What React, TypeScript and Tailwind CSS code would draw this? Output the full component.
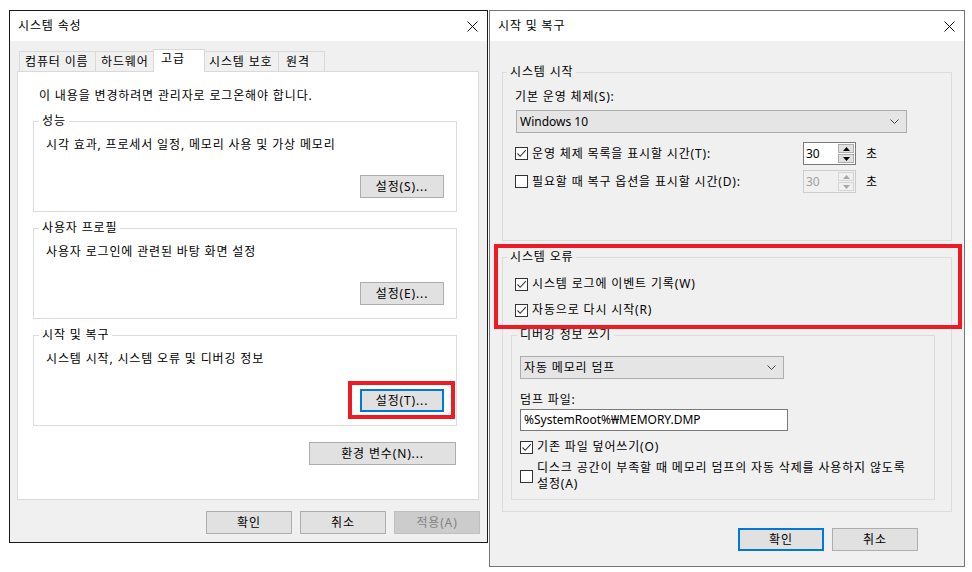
import type { ReactNode } from "react";

const font = "font-['Noto_Sans','Noto_Sans_CJK_KR',sans-serif]";

function CloseIcon() {
	return (
		<svg width="11" height="11" viewBox="0 0 11 11" aria-hidden>
			<path d="M0.5 0.5 L10.5 10.5 M10.5 0.5 L0.5 10.5" stroke="#111" strokeWidth="1" fill="none" />
		</svg>
	);
}

function TitleBar({ title }: { title: string }) {
	return (
		<div className="flex h-[30px] shrink-0 items-center justify-between bg-white pl-[8px] pr-[9px]">
			<span>{title}</span>
			<CloseIcon />
		</div>
	);
}

function Check({ checked }: { checked?: boolean }) {
	return (
		<span className="flex h-[13px] w-[13px] shrink-0 items-center justify-center border border-[#333333] bg-white">
			{checked ? (
				<svg width="11" height="11" viewBox="0 0 11 11" aria-hidden>
					<path d="M1.5 5.5 L4.2 8.3 L9.8 2.2" stroke="#333" strokeWidth="1.1" fill="none" />
				</svg>
			) : null}
		</span>
	);
}

function CheckRow({ checked, children, className = "" }: { checked?: boolean; children: ReactNode; className?: string }) {
	return (
		<div className={`flex items-center ${className}`}>
			<Check checked={checked} />
			<span className="ml-[4px]">{children}</span>
		</div>
	);
}

function Dropdown({ value, className = "", latin }: { value: string; className?: string; latin?: boolean }) {
	return (
		<div className={`flex h-[23px] items-center justify-between border border-[#adadad] bg-[#e5e5e5] pl-[3px] pr-[7px] ${className}`}>
			<span className={latin ? "tracking-normal" : ""}>{value}</span>
			<svg width="9" height="5" viewBox="0 0 9 5" aria-hidden>
				<path d="M0.5 0.5 L4.5 4.5 L8.5 0.5" stroke="#444" strokeWidth="1" fill="none" />
			</svg>
		</div>
	);
}

function Spin({ disabled }: { disabled?: boolean }) {
	const box = disabled ? "border-[#cccccc] bg-[#f0f0f0] text-[#a0a0a0]" : "border-[#7a7a7a] bg-white text-black";
	const arrowBtn = disabled ? "border-[#d5d5d5] bg-[#f0f0f0]" : "border-[#adadad] bg-[#e1e1e1]";
	const fill = disabled ? "#a8a8a8" : "#000";
	return (
		<div className={`flex h-[23px] w-[53px] border ${box}`}>
			<span className="flex flex-1 items-center pl-[2px] tracking-normal">30</span>
			<span className="flex w-[17px] flex-col justify-center gap-[1px] py-[1px] pr-[1px]">
				<span className={`flex h-[9px] items-center justify-center border ${arrowBtn}`}>
					<svg width="7" height="4" viewBox="0 0 7 4" aria-hidden>
						<path d="M0 4 L3.5 0 L7 4 Z" fill={fill} />
					</svg>
				</span>
				<span className={`flex h-[9px] items-center justify-center border ${arrowBtn}`}>
					<svg width="7" height="4" viewBox="0 0 7 4" aria-hidden>
						<path d="M0 0 L3.5 4 L7 0 Z" fill={fill} />
					</svg>
				</span>
			</span>
		</div>
	);
}

const buttonBase = "flex h-[23px] items-center justify-center bg-[#e1e1e1]";
const tabBase = "-ml-px flex h-[20px] items-center border border-b-0 border-[#d9d9d9] bg-[#f0f0f0]";

function SettingGroup({
	label,
	description,
	button,
	className = "",
	highlighted,
}: {
	label: string;
	description: string;
	button: string;
	className?: string;
	highlighted?: boolean;
}) {
	return (
		<fieldset className={`h-[99px] w-[424px] border border-[#dcdcdc] p-0 ${className}`}>
			<legend className="ml-[5px] px-[3px]">{label}</legend>
			<p className="pl-[12px] pt-[8px]">{description}</p>
			<div className="mt-[22px] flex justify-end pr-[12px]">
				{highlighted ? (
					<div className="relative">
						<button className={`${buttonBase} w-[84px] border-2 border-[#0078d7]`}>{button}</button>
						<span className="pointer-events-none absolute -left-[12px] -top-[8px] h-[38px] w-[107px] border-4 border-[#ed1c24]" />
					</div>
				) : (
					<button className={`${buttonBase} w-[84px] border border-[#adadad]`}>{button}</button>
				)}
			</div>
		</fieldset>
	);
}

function SystemProperties() {
	return (
		<div className="flex h-[533px] w-[479px] shrink-0 flex-col border border-[#1a1a1a] bg-[#f0f0f0]">
			<TitleBar title="시스템 속성" />
			<div className="flex flex-col px-[7px] pt-[8px]">
				<div className="flex h-[22px] items-end pl-[3px]">
					<div className={`${tabBase} w-[77px] pl-[5px]`}>컴퓨터 이름</div>
					<div className={`${tabBase} w-[59px] pl-[5px]`}>하드웨어</div>
					<div className="relative z-10 -mb-px -ml-px flex h-[23px] w-[52px] items-start border border-b-0 border-[#d9d9d9] bg-white pl-[7px] pt-[1px]">
						고급
					</div>
					<div className={`${tabBase} w-[75px] pl-[4px]`}>시스템 보호</div>
					<div className={`${tabBase} w-[47px] pl-[7px]`}>원격</div>
				</div>
				<div className="h-[429px] w-[462px] border border-[#d9d9d9] bg-white pl-[15px] pt-[16px]">
					<p className="pl-[6px]">이 내용을 변경하려면 관리자로 로그온해야 합니다.</p>
					<SettingGroup
						className="mt-[9px]"
						label="성능"
						description="시각 효과, 프로세서 일정, 메모리 사용 및 가상 메모리"
						button="설정(S)..."
					/>
					<SettingGroup
						className="mt-[8px]"
						label="사용자 프로필"
						description="사용자 로그인에 관련된 바탕 화면 설정"
						button="설정(E)..."
					/>
					<SettingGroup
						className="mt-[8px]"
						label="시작 및 복구"
						description="시스템 시작, 시스템 오류 및 디버깅 정보"
						button="설정(T)..."
						highlighted
					/>
					<div className="mt-[16px] flex w-[424px] justify-end pr-[1px]">
						<button className={`${buttonBase} w-[147px] border border-[#adadad]`}>환경 변수(N)...</button>
					</div>
				</div>
				<div className="mt-[11px] flex justify-end gap-[8px]">
					<button className={`${buttonBase} w-[86px] border border-[#adadad]`}>확인</button>
					<button className={`${buttonBase} w-[86px] border border-[#adadad]`}>취소</button>
					<button className="flex h-[23px] w-[86px] items-center justify-center border border-[#bfbfbf] bg-[#cccccc] text-[#838383]">
						적용(A)
					</button>
				</div>
			</div>
		</div>
	);
}

function StartupRecovery() {
	return (
		<div className="relative flex h-[557px] w-[476px] shrink-0 flex-col border border-[#767676] bg-[#f0f0f0]">
			<TitleBar title="시작 및 복구" />
			<div className="px-[12px] pt-[23px]">
				<fieldset className="h-[177px] w-[450px] border border-[#dcdcdc] p-0">
					<legend className="ml-[4px] px-[3px]">시스템 시작</legend>
					<div className="pl-[12px] pt-[9px]">
						<p>기본 운영 체제(S):</p>
						<Dropdown className="ml-[1px] mt-[5px] w-[391px]" value="Windows 10" latin />
						<div className="mt-[9px] flex items-center">
							<CheckRow checked className="w-[288px]">
								운영 체제 목록을 표시할 시간(T):
							</CheckRow>
							<Spin />
							<span className="ml-[10px]">초</span>
						</div>
						<div className="mt-[5px] flex items-center">
							<CheckRow className="w-[288px]">필요할 때 복구 옵션을 표시할 시간(D):</CheckRow>
							<Spin disabled />
							<span className="ml-[10px]">초</span>
						</div>
					</div>
				</fieldset>

				<fieldset className="mt-[8px] h-[263px] w-[450px] border border-[#dcdcdc] p-0">
					<legend className="ml-[4px] px-[3px]">시스템 오류</legend>
					<div className="pl-[12px] pt-[11px]">
						<CheckRow checked>시스템 로그에 이벤트 기록(W)</CheckRow>
						<CheckRow checked className="mt-[10px]">
							자동으로 다시 시작(R)
						</CheckRow>
					</div>
					<fieldset className="ml-[8px] mt-[9px] h-[173px] w-[424px] border border-[#dcdcdc] p-0">
						<legend className="ml-[5px] px-[3px]">디버깅 정보 쓰기</legend>
						<div className="pl-[8px] pt-[13px]">
							<Dropdown className="w-[264px]" value="자동 메모리 덤프" />
							<p className="mt-[13px]">덤프 파일:</p>
							<div className="mt-[1px] flex h-[22px] w-[268px] items-center border border-[#7a7a7a] bg-white pl-[3px] tracking-normal">
								%SystemRoot%₩MEMORY.DMP
							</div>
							<CheckRow checked className="mt-[8px]">
								기존 파일 덮어쓰기(O)
							</CheckRow>
							<CheckRow className="mt-[5px]">
								디스크 공간이 부족할 때 메모리 덤프의 자동 삭제를 사용하지 않도록
								<br />
								설정(A)
							</CheckRow>
						</div>
					</fieldset>
				</fieldset>

				<div className="mt-[16px] flex justify-end gap-[8px] pr-[34px]">
					<button className={`${buttonBase} w-[86px] border-2 border-[#0078d7]`}>확인</button>
					<button className={`${buttonBase} w-[86px] border border-[#adadad]`}>취소</button>
				</div>
			</div>
			<span className="pointer-events-none absolute left-[4px] top-[233px] h-[85px] w-[468px] border-4 border-[#ed1c24]" />
		</div>
	);
}

export default function App() {
	return (
		<div className={`min-h-screen bg-white pl-[9px] pt-[10px] text-[12px] leading-[16px] tracking-[0.85px] text-black ${font}`}>
			<div className="flex items-start gap-[1px]">
				<SystemProperties />
				<StartupRecovery />
			</div>
		</div>
	);
}
